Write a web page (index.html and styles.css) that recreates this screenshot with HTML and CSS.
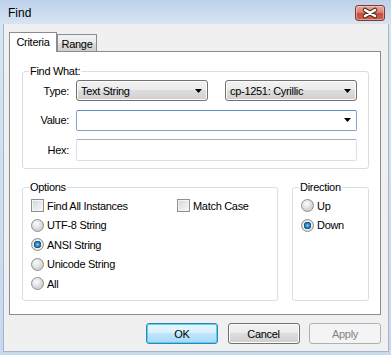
FILE: index.html
```html
<!DOCTYPE html>
<html lang="en">
<head>
  <meta charset="UTF-8">
  <meta name="viewport" content="width=device-width, initial-scale=1.0">
  <title>Find</title>
  <link rel="stylesheet" href="styles.css">
</head>
<body>
  <div class="window">
    <div class="titlebar">
      <span class="title">Find</span>
      <span class="close-btn">
        <svg width="30" height="16" viewBox="0 0 30 16">
          <path d="M10 5 L20 11 M20 5 L10 11" stroke="#5c2a24" stroke-width="4.6" stroke-linecap="round"/>
          <path d="M10 5 L20 11 M20 5 L10 11" stroke="#ffffff" stroke-width="2.6" stroke-linecap="round"/>
        </svg>
      </span>
    </div>

    <div class="client">
      <div class="tabs">
        <span class="tab active">Criteria</span>
        <span class="tab">Range</span>
      </div>

      <div class="panel">
        <fieldset class="group">
          <legend>Find What:</legend>
          <div class="form-grid">
            <label>Type:</label>
            <div class="pair">
              <div class="select">Text String
                <svg width="7" height="4" viewBox="0 0 7 4"><polygon points="0,0 7,0 3.5,4" fill="#000"/></svg>
              </div>
              <div class="select">cp-1251: Cyrillic
                <svg width="7" height="4" viewBox="0 0 7 4"><polygon points="0,0 7,0 3.5,4" fill="#000"/></svg>
              </div>
            </div>
            <label>Value:</label>
            <div class="combo">
              <svg width="7" height="4" viewBox="0 0 7 4"><polygon points="0,0 7,0 3.5,4" fill="#000"/></svg>
            </div>
            <label>Hex:</label>
            <div class="textbox"></div>
          </div>
        </fieldset>

        <div class="group-row">
          <fieldset class="group options">
            <legend>Options</legend>
            <div class="choice-grid">
              <div class="choice"><span class="check"></span>Find All Instances</div>
              <div class="choice"><span class="check"></span>Match Case</div>
              <div class="choice"><span class="radio"></span>UTF-8 String</div>
              <div class="choice second"><span class="radio checked"></span>ANSI String</div>
              <div class="choice second"><span class="radio"></span>Unicode String</div>
              <div class="choice second"><span class="radio"></span>All</div>
            </div>
          </fieldset>
          <fieldset class="group direction">
            <legend>Direction</legend>
            <div class="choice-list">
              <div class="choice"><span class="radio"></span>Up</div>
              <div class="choice"><span class="radio checked"></span>Down</div>
            </div>
          </fieldset>
        </div>
      </div>

      <div class="buttons">
        <button class="btn default">OK</button>
        <button class="btn">Cancel</button>
        <button class="btn disabled">Apply</button>
      </div>
    </div>
  </div>
</body>
</html>
```

FILE: styles.css
```css
body {
  margin: 0;
  padding: 0;
  font-family: "Liberation Sans", Arial, sans-serif;
  font-size: 11px;
  letter-spacing: -0.3px;
  color: #000;
  background-color: #fff;
}

.window {
  width: 391px;
  height: 355px;
  box-sizing: border-box;
  padding: 0 2px 3px 3px;
  display: flex;
  flex-direction: column;
  background: linear-gradient(to bottom, #bcd1e9 0, #d7e4f2 24px, #c6d9ee 100%);
}

.titlebar {
  height: 24px;
  flex-shrink: 0;
  display: flex;
  justify-content: space-between;
  align-items: flex-start;
  padding: 0 4px 0 5px;
}

.title {
  font-size: 12px;
  letter-spacing: 0;
  line-height: 21px;
  padding-top: 3px;
}

.close-btn {
  margin-top: 5px;
  width: 30px;
  height: 16px;
  box-sizing: border-box;
  border: 1px solid #7a3b33;
  border-radius: 3px;
  background: linear-gradient(to bottom, #e8aa9e 0, #d98070 45%, #c84e3c 55%, #c9604c 100%);
  box-shadow: inset 0 0 0 1px rgba(255, 220, 210, 0.5);
  display: flex;
  align-items: center;
  justify-content: center;
}

.close-btn svg {
  display: block;
  margin: -1px;
}

.client {
  flex: 1;
  display: flex;
  flex-direction: column;
  background-color: #f0f0f0;
  border: 1px solid #a2b5ca;
  border-top: none;
  padding: 8px 7px 0 5px;
}

/* tabs */
.tabs {
  display: flex;
  align-items: flex-end;
}

.tab {
  box-sizing: border-box;
  height: 17px;
  width: 40px;
  line-height: 18px;
  text-align: center;
  border: 1px solid #898c95;
  border-bottom: none;
  background: linear-gradient(to bottom, #f2f2f2 0, #ebebeb 50%, #dddddd 50%, #cfcfcf 100%);
}

.tab.active {
  position: relative;
  z-index: 1;
  width: 48px;
  height: 20px;
  line-height: 19px;
  margin-bottom: -1px;
  background: #fff;
}

.panel {
  box-sizing: border-box;
  height: 264px;
  background-color: #fff;
  border: 1px solid #898c95;
  padding: 12px 11px 0 12px;
}

/* group boxes */
.group {
  margin: 0;
  padding: 0;
  min-width: 0;
  border: 1px solid #d5dfe5;
  border-radius: 3px;
}

.group legend {
  margin-left: 6px;
  padding: 0 1px;
  line-height: 14px;
}

.form-grid {
  display: grid;
  grid-template-columns: 46px 281px;
  grid-template-rows: 21px 21px 22px;
  column-gap: 7px;
  row-gap: 8.5px;
  padding: 2px 0 7px 0;
}

.form-grid label {
  text-align: right;
  align-self: center;
}

.pair {
  display: grid;
  grid-template-columns: 1fr 1fr;
  column-gap: 17px;
}

.select {
  box-sizing: border-box;
  height: 21px;
  display: flex;
  align-items: center;
  justify-content: space-between;
  padding: 0 5px 0 4px;
  border: 1px solid #707070;
  border-radius: 3px;
  background: linear-gradient(to bottom, #f2f2f2 0, #ebebeb 50%, #dddddd 50%, #cfcfcf 100%);
  box-shadow: inset 0 0 0 1px #fcfcfc;
}

.combo {
  box-sizing: border-box;
  height: 21px;
  display: flex;
  align-items: center;
  justify-content: flex-end;
  padding-right: 5px;
  border: 1px solid #7da2ce;
  border-top-color: #5c8fc4;
  border-radius: 2px;
  background-color: #fff;
}

.textbox {
  box-sizing: border-box;
  height: 22px;
  border: 1px solid #dbdfe6;
  border-top-color: #abadb3;
  border-radius: 2px;
  background-color: #fff;
}

.group-row {
  display: flex;
  gap: 14px;
  margin-top: 11px;
}

.options {
  width: 256px;
  box-sizing: border-box;
}

.direction {
  flex: 1;
}

.choice-grid {
  display: grid;
  grid-template-columns: 146px 1fr;
  grid-auto-rows: 19.5px;
  padding: 2px 0 6px 8px;
}

.choice-grid .second {
  grid-column: 1 / 3;
}

.choice-list {
  display: grid;
  grid-auto-rows: 19.5px;
  padding: 2px 0 6px 8px;
}

.choice {
  display: flex;
  align-items: center;
  gap: 3px;
}

.check {
  box-sizing: border-box;
  width: 13px;
  height: 13px;
  border: 1px solid #8e8f8f;
  background: linear-gradient(135deg, #cfd0d2 0, #e7e8ea 50%, #f8f8f8 100%);
  box-shadow: inset 0 0 0 1px #f4f4f4;
}

.radio {
  box-sizing: border-box;
  width: 13px;
  height: 13px;
  border: 1px solid #8e8f8f;
  border-radius: 50%;
  background: radial-gradient(circle at 40% 35%, #fbfbfb 0, #e4e4e4 4px, #d2d2d2 6px);
}

.radio.checked {
  background: radial-gradient(circle at 50% 50%, #8fd8ff 0, #3a95d4 1.5px, #1c5f96 3px, #25507a 3.5px, #f2f2f2 4px, #e0e0e0 5px, #cfcfcf 6px);
}

/* buttons */
.buttons {
  display: flex;
  justify-content: flex-end;
  gap: 9.5px;
  margin-top: 8px;
}

.btn {
  box-sizing: border-box;
  width: 72px;
  height: 21px;
  margin: 0;
  padding: 0;
  font-family: inherit;
  font-size: 11px;
  letter-spacing: -0.3px;
  color: #000;
  border: 1px solid #707070;
  border-radius: 3px;
  background: linear-gradient(to bottom, #f2f2f2 0, #ebebeb 50%, #dddddd 50%, #cfcfcf 100%);
  box-shadow: inset 0 0 0 1px #fcfcfc;
}

.btn.default {
  border-color: #3c7fb1;
  background: linear-gradient(to bottom, #eaf6fd 0, #d9f0fc 50%, #bee6fd 50%, #a7d9f5 100%);
  box-shadow: inset 0 0 0 1px #48d7fb;
}

.btn.disabled {
  color: #838383;
  border-color: #adb2b5;
  background: #f4f4f4;
  box-shadow: none;
}
```
